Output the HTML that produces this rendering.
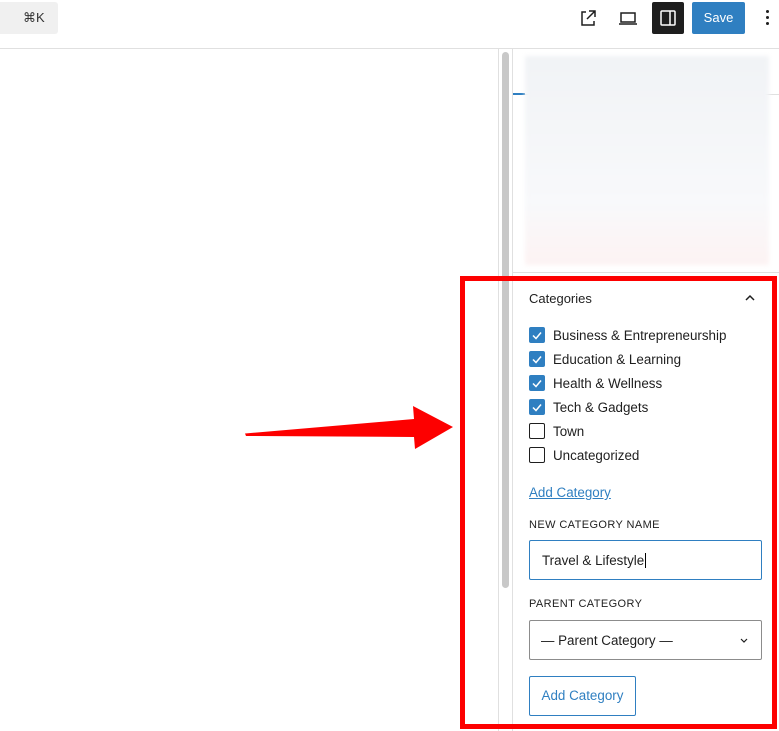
<!DOCTYPE html>
<html><head><meta charset="utf-8"><style>
*{box-sizing:border-box;margin:0;padding:0}
body{width:779px;height:731px;overflow:hidden;background:#fff;font-family:"Liberation Sans",sans-serif;color:#1e1e1e;position:relative}
.a{position:absolute}
.cb{position:absolute;left:529px;width:16px;height:16px;border-radius:2px}
.on{background:#2f7fc1}
.off{border:1.5px solid #1e1e1e;background:#fff}
.lbl{position:absolute;left:553px;font-size:13.4px}
</style></head><body>
<div class="a" style="left:0;top:2px;width:58px;height:32px;background:#f0f0f0;border-radius:0 3px 3px 0"></div>
<div class="a" style="left:23px;top:10px;font-size:13px;color:#333">⌘K</div>
<svg class="a" style="left:578px;top:8px" width="20" height="20" viewBox="0 0 20 20" fill="none" stroke="#1e1e1e" stroke-width="1.5"><path d="M8 4H4v13h12v-4"/><path d="M11 3h6v6M17 3l-8 8"/></svg>
<svg class="a" style="left:617px;top:8px" width="22" height="20" viewBox="0 0 22 20" fill="none" stroke="#1e1e1e" stroke-width="1.5"><rect x="4" y="5" width="14" height="9"/><path d="M2 16h18"/></svg>
<div class="a" style="left:652px;top:2px;width:32px;height:32px;background:#1e1e1e;border-radius:2px"></div>
<svg class="a" style="left:658px;top:8px" width="20" height="20" viewBox="0 0 20 20" fill="none" stroke="#fff" stroke-width="1.5"><rect x="3" y="3" width="14" height="14" rx="1"/><path d="M12 3v14"/></svg>
<div class="a" style="left:692px;top:2px;width:53px;height:32px;background:#2f7fc1;border-radius:2px;color:#fff;font-size:13px;font-weight:500;text-align:center;line-height:32px">Save</div>
<div class="a" style="left:766px;top:10px;width:3px;height:3px;background:#1e1e1e;border-radius:50%;box-shadow:0 6px 0 #1e1e1e,0 12px 0 #1e1e1e"></div>
<div class="a" style="left:0;top:48px;width:779px;height:1px;background:#e0e0e0"></div>
<div class="a" style="left:498px;top:49px;width:1px;height:682px;background:#e0e0e0"></div>
<div class="a" style="left:502px;top:52px;width:7px;height:536px;background:#c8c8c8;border-radius:4px"></div>
<div class="a" style="left:512px;top:49px;width:1px;height:682px;background:#e0e0e0"></div>
<div class="a" style="left:513px;top:94px;width:266px;height:1px;background:#e0e0e0"></div>
<div class="a" style="left:513px;top:93px;width:12px;height:2px;background:#2f7fc1"></div>
<div class="a" style="left:525px;top:56px;width:244px;height:209px;background:linear-gradient(#f1f3f6,#f8f9fb 70%,#fdf3f3);filter:blur(2px)"></div>
<div class="a" style="left:513px;top:272px;width:266px;height:1px;background:#e0e0e0"></div>
<div class="a" style="left:529px;top:291px;font-size:13px;font-weight:500">Categories</div>
<svg class="a" style="left:742px;top:290px" width="16" height="16" viewBox="0 0 16 16" fill="none" stroke="#1e1e1e" stroke-width="1.5"><path d="M4 10l4-4 4 4"/></svg>
<div class="cb on" style="top:327px"></div><div class="lbl" style="top:328px">Business &amp; Entrepreneurship</div>
<div class="cb on" style="top:351px"></div><div class="lbl" style="top:352px">Education &amp; Learning</div>
<div class="cb on" style="top:375px"></div><div class="lbl" style="top:376px">Health &amp; Wellness</div>
<div class="cb on" style="top:399px"></div><div class="lbl" style="top:400px">Tech &amp; Gadgets</div>
<div class="cb off" style="top:423px"></div><div class="lbl" style="top:424px">Town</div>
<div class="cb off" style="top:447px"></div><div class="lbl" style="top:448px">Uncategorized</div>
<svg class="a" style="left:529px;top:327px" width="16" height="96" viewBox="0 0 16 96" fill="none" stroke="#fff" stroke-width="1.5"><path d="M4 8.5l3 3 5-6M4 32.5l3 3 5-6M4 56.5l3 3 5-6M4 80.5l3 3 5-6"/></svg>
<div class="a" style="left:529px;top:485px;font-size:13.4px;color:#2f7fc1;text-decoration:underline">Add Category</div>
<div class="a" style="left:529px;top:519px;font-size:11px;letter-spacing:.4px;font-weight:500">NEW CATEGORY NAME</div>
<div class="a" style="left:529px;top:540px;width:233px;height:40px;border:1.5px solid #2f7fc1;border-radius:2px"></div>
<div class="a" style="left:542px;top:553px;font-size:13.4px">Travel &amp; Lifestyle<span style="border-left:1px solid #000;margin-left:1px"></span></div>
<div class="a" style="left:529px;top:598px;font-size:11px;letter-spacing:.4px;font-weight:500">PARENT CATEGORY</div>
<div class="a" style="left:529px;top:620px;width:233px;height:40px;border:1px solid #8c8c8c;border-radius:2px"></div>
<div class="a" style="left:541px;top:633px;font-size:13.4px">— Parent Category —</div>
<svg class="a" style="left:738px;top:634px" width="12" height="12" viewBox="0 0 12 12" fill="none" stroke="#1e1e1e" stroke-width="1.2"><path d="M3 5l3 3 3-3"/></svg>
<div class="a" style="left:529px;top:676px;width:107px;height:40px;border:1px solid #2f7fc1;border-radius:2px;color:#2f7fc1;font-size:13.4px;text-align:center;line-height:38px">Add Category</div>
<div class="a" style="left:460px;top:276px;width:317px;height:453px;border:5px solid #fd0000"></div>
<svg class="a" style="left:0;top:0" width="779" height="731"><path d="M245 433.5L414 419L413 406L453 427L415 449L414 437L246 436Z" fill="#fd0000"/></svg>
</body></html>
